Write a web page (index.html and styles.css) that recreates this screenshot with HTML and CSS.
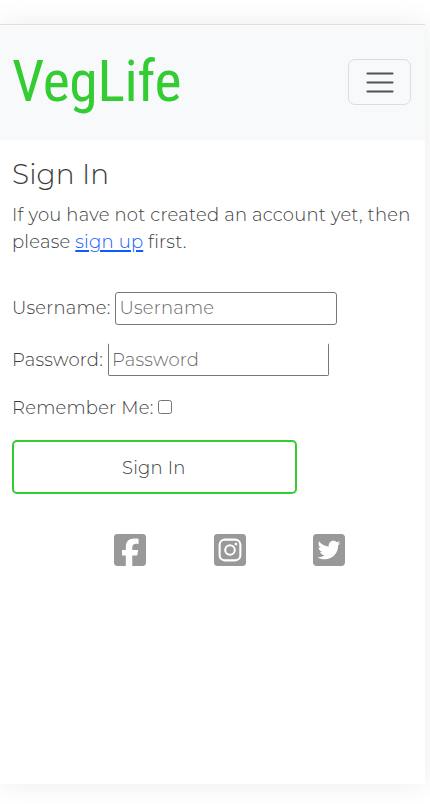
FILE: index.html
```html
<!DOCTYPE html>
<html lang="en">
<head>
<meta charset="utf-8">
<title>VegLife</title>
<link rel="stylesheet" href="styles.css">
</head>
<body>
<div class="page">
  <header class="navbar">
    <a class="brand">VegLife</a>
    <button class="toggler" aria-label="Menu">
      <svg width="34" height="34" viewBox="0 0 34 34"><path d="M4.500 8.500h25M4.500 17.500h25M4.500 26.500h25" stroke="#4f5359" stroke-width="2.200" stroke-linecap="round"/></svg>
    </button>
  </header>
  <main class="content">
    <h1>Sign In</h1>
    <p class="intro">If you have not created an account yet, then<br>please <a href="#">sign up</a> first.</p>
    <form>
      <div class="field user"><label for="u">Username:</label><input id="u" type="text" placeholder="Username"></div>
      <div class="field pass"><label for="p">Password:</label><input id="p" type="password" placeholder="Password"></div>
      <div class="field remember"><label for="r">Remember Me:</label><input id="r" type="checkbox"></div>
      <button class="submit" type="button">Sign In</button>
    </form>
    <footer class="social">
      <svg viewBox="0 0 448 448"><path d="M400 0H48A48 48 0 0 0 0 48V400A48 48 0 0 0 48 448H165V302H112V224H165V190C165 103 204 63 289 63C305 63 333 66 344 69V139C338 138 327 138 314 138C272 138 256 154 256 195V224H339L325 302H256V448H400A48 48 0 0 0 448 400V48A48 48 0 0 0 400 0Z"/></svg>
      <svg viewBox="0 0 448 448"><rect width="448" height="448" rx="48"/><g fill="none" stroke="#fff" stroke-width="29"><rect x="79" y="79" width="290" height="290" rx="72"/><circle cx="224" cy="224" r="67"/></g><circle cx="307" cy="141" r="20" fill="#fff"/></svg>
      <svg viewBox="0 0 448 448"><path fill-rule="evenodd" d="M400 0H48C21.500 0 0 21.500 0 48v352c0 26.500 21.500 48 48 48h352c26.500 0 48-21.500 48-48V48c0-26.500-21.500-48-48-48zm-48.900 158.800c.2 2.800.2 5.700.2 8.500 0 86.700-66 186.600-186.600 186.600-37.200 0-71.700-10.800-100.700-29.400 5.300.6 10.400.8 15.800.8 30.700 0 58.900-10.400 81.400-28-28.800-.6-53-19.500-61.300-45.500 10.100 1.500 19.200 1.500 29.600-1.200-30-6.100-52.500-32.500-52.500-64.400v-.8c8.700 4.900 18.900 7.900 29.600 8.300a65.447 65.447 0 0 1-29.200-54.600c0-12.200 3.200-23.400 8.900-33.100 32.300 39.800 80.800 65.800 135.200 68.600-9.300-44.500 24-80.600 64-80.600 18.900 0 35.900 7.900 47.900 20.700 14.800-2.800 29-8.300 41.600-15.800-4.900 15.200-15.200 28-28.800 36.100 13.200-1.400 26-5.100 37.800-10.200-8.900 13.100-20.100 24.700-32.900 34z"/></svg>
    </footer>
  </main>
</div>
</body>
</html>
```

FILE: styles.css
```css
* { box-sizing: border-box; }
body {
  margin: 0;
  padding-top: 24px;
  height: 804px;
  overflow: hidden;
  background: #fff;
  color: #3c3c3c;
  font: 300 18px/27px Montserrat, Inter, sans-serif;
  letter-spacing: .21px;
}
.page {
  width: 425px;
  height: 760px;
  background: #fff;
  box-shadow: 0 0 28px rgba(0, 0, 0, .08);
}
.navbar {
  display: flex;
  align-items: center;
  justify-content: space-between;
  height: 116px;
  padding: 0 14px 1px 12px;
  background: #f8f9fb;
  border-top: 1px solid #dedede;
}
.brand {
  color: #3c3;
  font: 400 57.6px/86px "Roboto Condensed", Roboto, sans-serif;
  font-stretch: 75%;
  letter-spacing: -.35px;
}
.toggler {
  display: flex;
  align-items: center;
  justify-content: center;
  width: 63px;
  height: 46px;
  padding: 0;
  background: none;
  border: 1px solid #dcddde;
  border-radius: 7px;
}
.content { padding: 17px 12px 0; }
h1 {
  margin: 0;
  font-size: 28px;
  font-weight: 300;
  line-height: 34px;
  letter-spacing: .08px;
}
.intro { margin: 11px 0 36px; white-space: nowrap; }
.intro a { color: #0d5cfd; text-underline-offset: 2px; text-decoration-thickness: 2px; }
.field { display: flex; align-items: center; }
.user { height: 33px; }
.pass { height: 33px; margin-top: 18px; }
.pass label { padding-top: 2px; }
.remember { height: 27px; margin-top: 18px; }
.field input[type="text"], .field input[type="password"] {
  width: 222px;
  height: 33px;
  margin: 0 0 0 4px;
  padding: 0 4px 2px;
  color: #666;
  font: inherit;
  letter-spacing: inherit;
  background: #fff;
  border: 1px solid #777;
  border-radius: 3px;
}
.field input[type="password"] { width: 221px; margin-left: 5px; padding: 1px 3px; border-top-color: transparent; border-radius: 2px; }
input::placeholder { color: #666; opacity: 1; }
.remember label { padding-top: 1px; }
.field input[type="checkbox"] { width: 14px; height: 14px; margin: 0 0 2px 5px; }
.submit {
  display: block;
  width: 284.500px;
  height: 54px;
  margin-top: 19px;
  padding: 2px 1px 0 0;
  background: #fff;
  border: 2px solid #3c3;
  border-radius: 5px;
  color: #3c3c3c;
  font: inherit;
  letter-spacing: inherit;
}
.social { display: flex; gap: 67.300px; margin: 39.600px 0 0 102.400px; }
.social svg { width: 32px; height: 32px; fill: #999; }
```
